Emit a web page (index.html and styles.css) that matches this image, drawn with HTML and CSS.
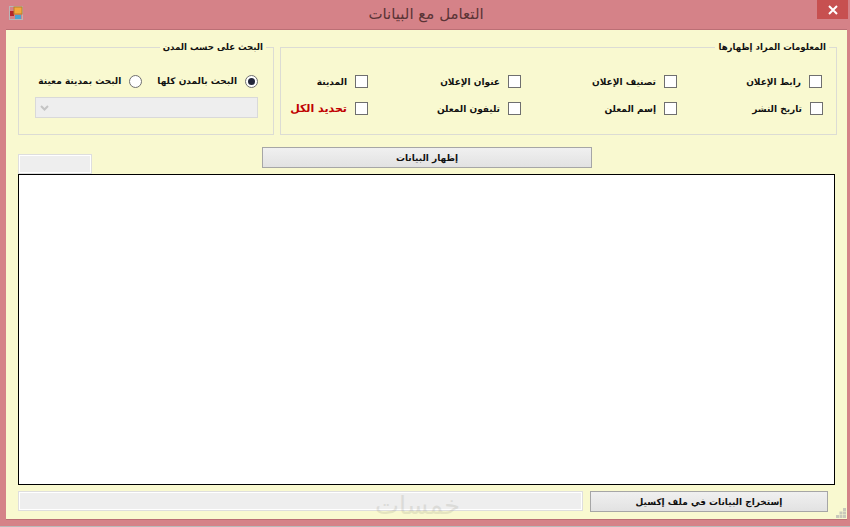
FILE: index.html
```html
<!DOCTYPE html>
<html lang="ar">
<head>
<meta charset="utf-8">
<title>التعامل مع البيانات</title>
<link rel="stylesheet" href="styles.css">
</head>
<body>
<div class="window">
  <header class="titlebar">
    <svg class="app-icon" width="14" height="14" viewBox="0 0 14 14">
      <rect x="0.5" y="0.5" width="13" height="13" fill="none" stroke="#b9b4b6"/>
      <rect x="1" y="5" width="4" height="5" fill="#b3282c"/>
      <rect x="5" y="1" width="8" height="7" fill="#f3a93c" stroke="#b87f2c"/>
      <rect x="6" y="9" width="6" height="4" fill="#4aa3cf"/>
    </svg>
    <h1 class="title">التعامل مع البيانات</h1>
    <button class="close" aria-label="إغلاق">
      <svg width="10" height="10" viewBox="0 0 10 10"><path d="M1 1 9 9M9 1 1 9" stroke="#fff" stroke-width="2"/></svg>
    </button>
  </header>
  <main class="client">
    <div class="groups">
      <fieldset class="group group-city">
        <legend>البحث على حسب المدن</legend>
        <div class="radios">
          <label class="opt"><span class="radio on"></span>البحث بالمدن كلها</label>
          <label class="opt"><span class="radio"></span>البحث بمدينة معينة</label>
        </div>
        <div class="combo">
          <svg width="9" height="6" viewBox="0 0 9 6"><path d="M1 1 4.500 4.500 8 1" fill="none" stroke="#c4c4c4" stroke-width="2"/></svg>
        </div>
      </fieldset>
      <fieldset class="group group-info">
        <legend>المعلومات المراد إظهارها</legend>
        <div class="checks">
          <label class="opt nudge"><span class="check"></span>رابط الإعلان</label>
          <label class="opt"><span class="check"></span>تصنيف الإعلان</label>
          <label class="opt"><span class="check"></span>عنوان الإعلان</label>
          <label class="opt"><span class="check"></span>المدينة</label>
          <label class="opt"><span class="check"></span>تاريخ النشر</label>
          <label class="opt"><span class="check"></span>إسم المعلن</label>
          <label class="opt"><span class="check"></span>تليفون المعلن</label>
          <label class="opt all"><span class="check"></span>تحديد الكل</label>
        </div>
      </fieldset>
    </div>
    <div class="actions">
      <div class="count"></div>
      <button class="btn btn-show">إظهار البيانات</button>
    </div>
    <div class="grid-view"></div>
    <div class="footer">
      <div class="progress"></div>
      <button class="btn btn-export">إستخراج البيانات في ملف إكسيل</button>
    </div>
    <svg class="grip" width="10" height="10" viewBox="0 0 10 10" fill="#c9c9bb">
      <rect x="7" y="0" width="3" height="3"/><rect x="3.500" y="3.500" width="3" height="3"/><rect x="7" y="3.500" width="3" height="3"/><rect x="0" y="7" width="3" height="3"/><rect x="3.500" y="7" width="3" height="3"/><rect x="7" y="7" width="3" height="3"/>
    </svg>
    <div class="watermark">خمسات</div>
  </main>
</div>
</body>
</html>
```
FILE: styles.css
```css
* { box-sizing: border-box; }
html, body { margin: 0; padding: 0; }
body {
  width: 850px;
  height: 527px;
  overflow: hidden;
  background: #b9b9b9;
  font-family: "DejaVu Sans", "Liberation Sans", sans-serif;
}
.window {
  width: 850px;
  height: 526px;
  background: #d58288;
  display: flex;
  flex-direction: column;
  padding: 0 6px 7px;
}
.titlebar {
  height: 29px;
  flex: none;
  position: relative;
  display: flex;
  align-items: center;
  justify-content: center;
}
.app-icon { position: absolute; left: 3px; top: 6px; }
.title {
  margin: 0;
  font-size: 15px;
  font-weight: 400;
  color: #5a3436;
  position: relative;
  top: -1px;
  left: 1px;
}
.close {
  position: absolute;
  right: -4px;
  top: 0;
  width: 31px;
  height: 19px;
  border: 0;
  padding: 0;
  background: #c75050;
  display: flex;
  align-items: center;
  justify-content: center;
}
.client {
  flex: 1;
  position: relative;
  background: #f9f9d0;
  border-top: 1px solid #bb6f75;
  box-shadow: 0 1px 0 #bb6f75;
  padding: 11px 12px 0;
  margin-right: -3px;
  display: flex;
  flex-direction: column;
}
.groups { display: flex; gap: 6px; height: 94px; flex: none; }
.group {
  margin: 0;
  padding: 0;
  min-width: 0;
  height: 94px;
  border: 1px solid #dcdcd4;
  flex: none;
}
.group legend {
  padding: 0 3px;
  margin: 0 7px 0 auto;
  font-size: 8.600px;
  font-weight: 700;
  color: #111;
  line-height: 12px;
  direction: rtl;
}
.group-city { width: 256px; padding: 20px 15px 0 16px; }
.group-city legend { margin-right: -8px; }
.group-info { width: 557px; }
.opt {
  display: flex;
  align-items: center;
  gap: 8px;
  font-size: 9px;
  font-weight: 700;
  color: #111;
  direction: rtl;
  white-space: nowrap;
}
.radios { display: flex; direction: rtl; gap: 15px; height: 16px; }
.radio {
  width: 13px;
  height: 13px;
  flex: none;
  border: 1px solid #6f6f6f;
  border-radius: 50%;
  background: #fff;
  position: relative;
}
.radio.on::after {
  content: "";
  position: absolute;
  inset: 2px;
  border-radius: 50%;
  background: #22263a;
}
.combo {
  margin-top: 8px;
  height: 21px;
  background: #eeeeee;
  border: 1px solid #d9d9d9;
  display: flex;
  align-items: center;
  padding-left: 4px;
}
.checks {
  direction: rtl;
  display: grid;
  grid-template-columns: 146px 156px 153px 1fr;
  grid-auto-rows: 27px;
  align-items: center;
  padding: 15px 13px 0 0;
}
.check {
  width: 13px;
  height: 13px;
  flex: none;
  border: 1px solid #6f6f6f;
  background: #fff;
}
.nudge { margin-right: 1px; }
.all { color: #c00000; font-size: 11px; }
.actions {
  height: 39px;
  flex: none;
  display: flex;
  justify-content: flex-start;
}
.count {
  margin-top: 19px;
  width: 74px;
  height: 20px;
  background: #eeeeee;
  border: 1px solid #dedede;
  box-shadow: inset 0 0 0 1px #fff;
}
.btn {
  border: 1px solid #a6a6a6;
  background: linear-gradient(#f0f0f0, #e2e2e2);
  font-family: inherit;
  font-size: 9px;
  font-weight: 700;
  color: #111;
  padding: 0;
  direction: rtl;
}
.btn-show {
  margin: 12px 0 0 170px;
  width: 330px;
  height: 21px;
}
.grid-view {
  height: 311px;
  flex: none;
  width: 817px;
  background: #fff;
  border: 1px solid #000;
}
.footer { display: flex; gap: 7px; margin-top: 6px; }
.progress {
  width: 565px;
  height: 20px;
  background: #eeeeee;
  border: 1px solid #dedede;
  box-shadow: inset 0 0 0 1px #fff;
}
.btn-export { width: 238px; height: 21px; }
.grip { position: absolute; right: 1px; bottom: 1px; }
.watermark {
  position: absolute;
  left: 369px;
  top: 453px;
  font-size: 25.500px;
  line-height: 44px;
  color: #8a8a7a;
  opacity: 0.18;
  direction: rtl;
  pointer-events: none;
}
```
